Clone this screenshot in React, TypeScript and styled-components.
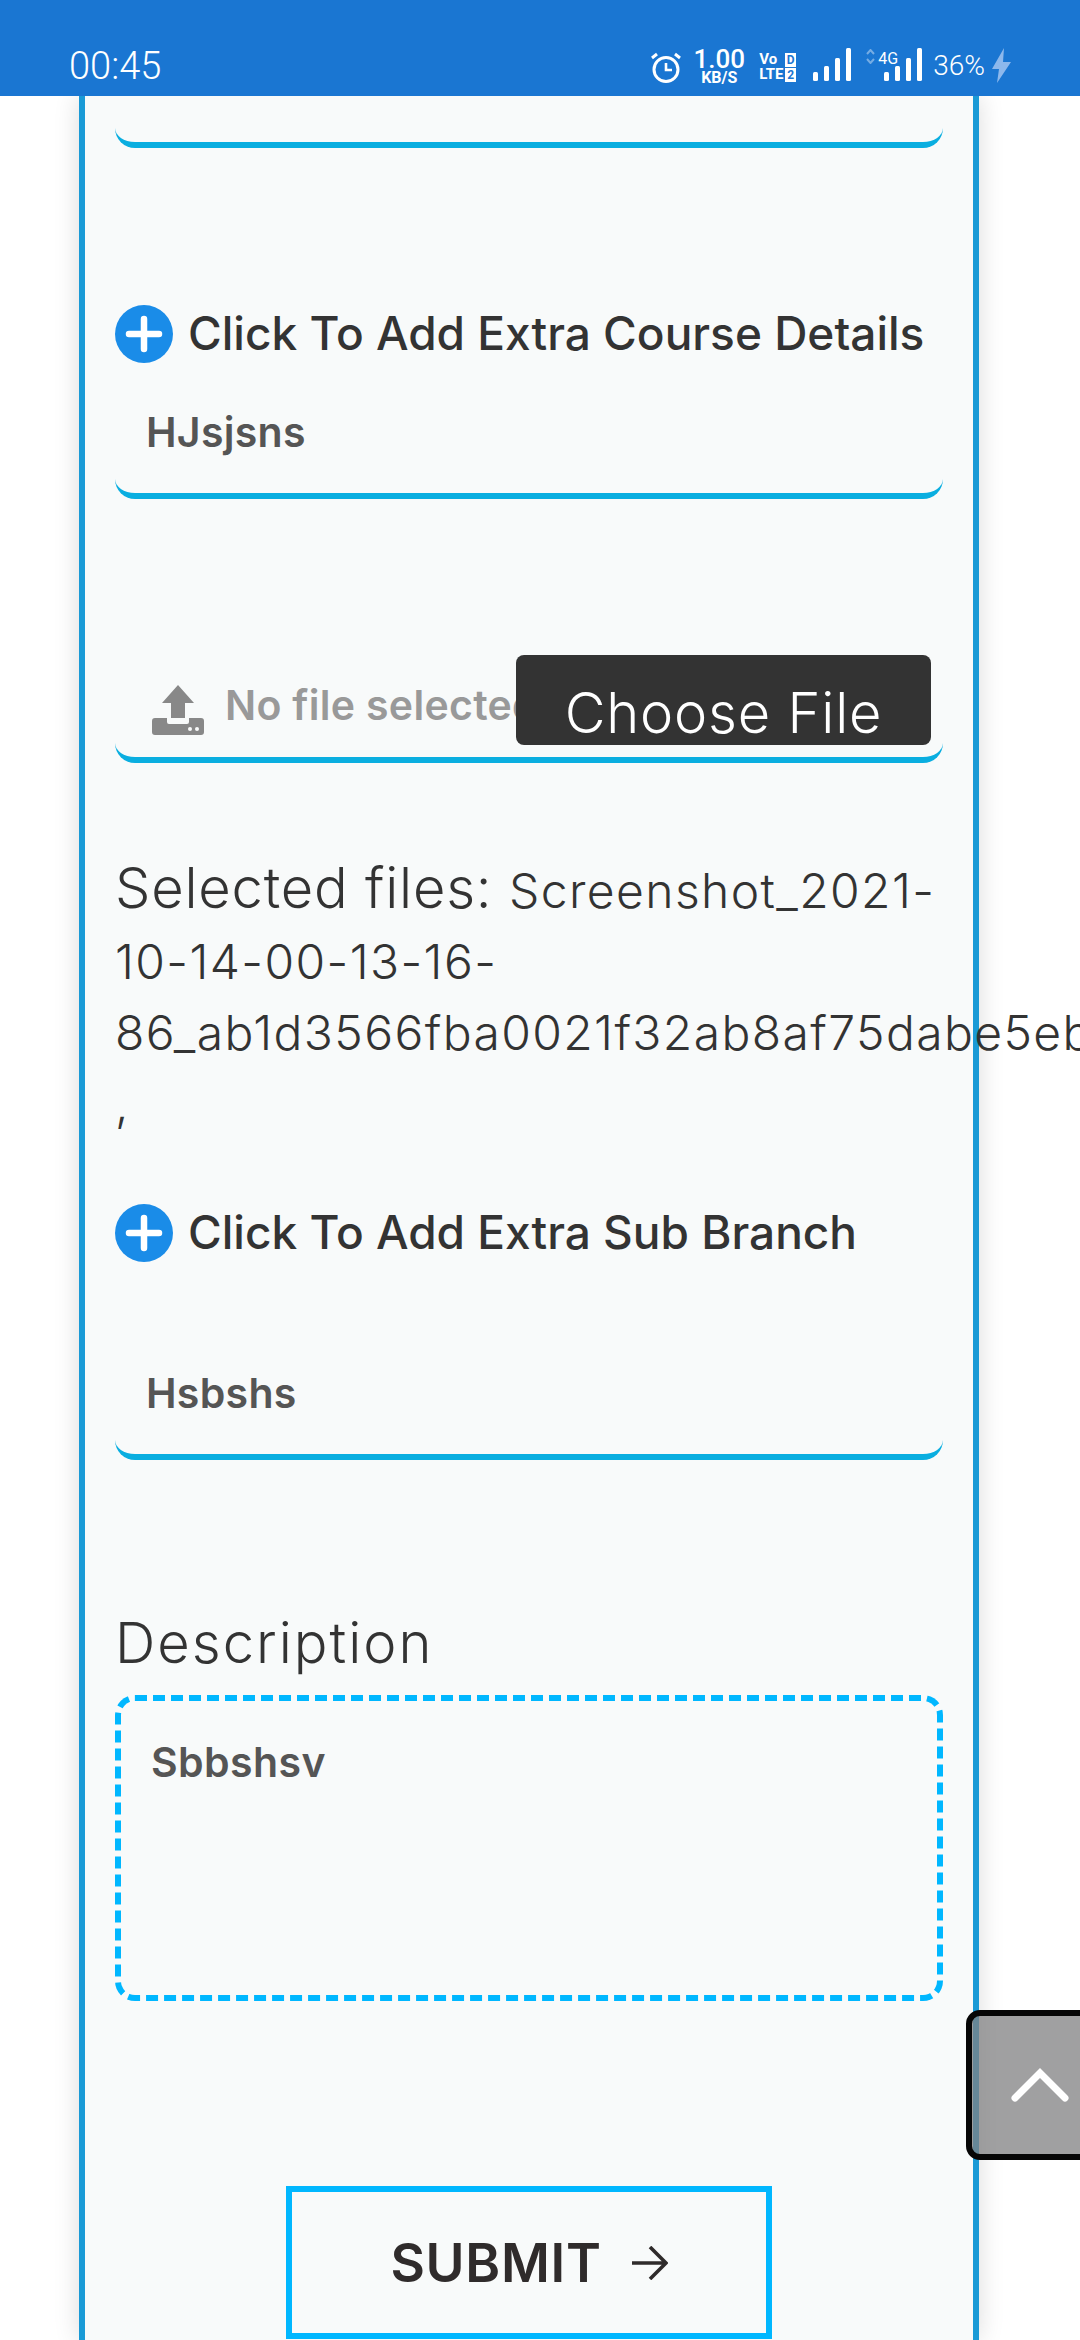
import styled, { createGlobalStyle } from "styled-components";

const GlobalStyle = createGlobalStyle`
  html, body {
    margin: 0;
    padding: 0;
    background: #ffffff;
  }
  * {
    box-sizing: border-box;
  }
`;

const colors = {
  bar: "#1a76d2",
  card: "#f8fafa",
  cardBorder: "#1a9ad6",
  line: "#0aaee0",
  dash: "#00b7ff",
  text: "#2f2b2b",
};

const FONT = `Inter, "Open Sans", sans-serif`;

const Page = styled.div`
  width: 1080px;
  height: 2340px;
  overflow: hidden;
  display: flex;
  flex-direction: column;
  font-family: ${FONT};
  position: relative;
`;

const StatusBar = styled.div`
  flex: none;
  height: 96px;
  background: ${colors.bar};
  display: flex;
  align-items: flex-start;
  padding: 48px 69px 0 69px;
  color: #ffffff;
  font-family: Roboto, sans-serif;
  position: relative;
  z-index: 2;
`;

const Clock = styled.div`
  font-size: 38px;
  font-weight: 300;
  line-height: 36px;
  margin-top: 0;
`;

const StatusIcons = styled.div`
  margin-left: auto;
  display: flex;
  align-items: flex-start;
`;

const AlarmIcon = styled.svg`
  width: 30px;
  height: 31px;
  margin-top: 4px;
`;

const Speed = styled.div`
  margin-left: 13px;
  width: 50px;
  display: flex;
  flex-direction: column;
  align-items: center;
  font-weight: 500;
`;

const SpeedValue = styled.span`
  font-size: 26px;
  line-height: 22px;
`;

const SpeedUnit = styled.span`
  font-size: 16px;
  line-height: 14px;
  margin-top: 1px;
  font-weight: 700;
`;

const Volte = styled.div`
  margin-left: 15px;
  width: 37px;
  display: flex;
  flex-direction: column;
  margin-top: 4px;
  font-weight: 700;
  font-size: 15px;
  line-height: 15px;
`;

const VolteRow = styled.div`
  display: flex;
  justify-content: space-between;
  align-items: center;
  height: 15px;
`;

const VolteBox = styled.span`
  background: #ffffff;
  color: ${colors.bar};
  width: 11px;
  height: 14px;
  font-size: 12px;
  line-height: 14px;
  text-align: center;
`;

const SignalSvg = styled.svg<{ $left: number }>`
  width: 38px;
  height: 33px;
  margin-left: ${(p) => p.$left}px;
  flex: none;
`;

const DataGroup = styled.div`
  margin-left: 15px;
  width: 56px;
  height: 33px;
  display: flex;
  position: relative;
`;

const UpDown = styled.svg`
  width: 9px;
  height: 15px;
  margin-top: 1px;
  flex: none;
`;

const FourG = styled.span`
  position: absolute;
  left: 12px;
  top: 3px;
  font-size: 16px;
  line-height: 16px;
  font-weight: 400;
`;

const Battery = styled.div`
  margin-left: 11px;
  font-size: 28px;
  font-weight: 300;
  line-height: 30px;
  margin-top: 3px;
`;

const BoltIcon = styled.svg`
  width: 19px;
  height: 35px;
  margin-left: 7px;
`;

const Card = styled.div`
  flex: 1;
  width: 900px;
  margin-left: 79px;
  border-left: 6px solid ${colors.cardBorder};
  border-right: 6px solid ${colors.cardBorder};
  background: ${colors.card};
  box-shadow: 0 0 24px rgba(0, 0, 0, 0.14);
  padding: 0 30px;
  display: flex;
  flex-direction: column;
`;

const Field = styled.div<{ $height: number }>`
  flex: none;
  height: ${(p) => p.$height}px;
  border-bottom: 6px solid ${colors.line};
  border-radius: 0 0 20px 20px;
  display: flex;
  align-items: flex-end;
  padding: 0 0 37px 31px;
`;

const FieldText = styled.span`
  font-size: 41px;
  font-weight: 600;
  line-height: 48px;
  color: #555555;
  letter-spacing: 0.3px;
`;

const AddRow = styled.div<{ $top: number }>`
  flex: none;
  display: flex;
  align-items: center;
  gap: 15px;
  margin-top: ${(p) => p.$top}px;
  height: 58px;
`;

const AddIcon = styled.svg`
  width: 58px;
  height: 58px;
  flex: none;
`;

const AddLabel = styled.span`
  font-size: 46px;
  font-weight: 500;
  color: #333333;
  white-space: nowrap;
  margin-top: -2px;
`;

const FileField = styled.div`
  flex: none;
  height: 108px;
  margin-top: 156px;
  border-bottom: 6px solid ${colors.line};
  border-radius: 0 0 20px 20px;
  display: flex;
  padding: 0 12px 12px 37px;
`;

const FileName = styled.div`
  flex: 1;
  min-width: 0;
  overflow: hidden;
  display: flex;
  align-items: flex-end;
  gap: 21px;
  white-space: nowrap;
  padding-bottom: 10px;
`;

const FileNameText = styled.span`
  font-size: 41px;
  font-weight: 600;
  line-height: 48px;
  letter-spacing: 0.3px;
  color: #999999;
  margin-bottom: 6px;
`;

const UploadIcon = styled.svg`
  width: 52px;
  height: 50px;
  flex: none;
`;

const ChooseButton = styled.div`
  flex: none;
  width: 415px;
  height: 90px;
  background: #333333;
  border-radius: 8px;
  color: #ffffff;
  font-size: 56px;
  font-weight: 300;
  line-height: 60px;
  letter-spacing: 0.8px;
  text-align: center;
  padding-top: 28px;
  white-space: nowrap;
`;

const SelectedFiles = styled.div`
  flex: none;
  margin-top: 90px;
  font-size: 48px;
  line-height: 71px;
  height: 289px;
  color: #333333;
  font-weight: 300;
  letter-spacing: 1.4px;
`;

const SelectedLabel = styled.span`
  font-size: 56px;
  letter-spacing: 0.8px;
`;

const LongName = styled.span`
  white-space: nowrap;
`;

const DescriptionLabel = styled.div`
  flex: none;
  margin-top: 147px;
  font-size: 56px;
  line-height: 72px;
  font-weight: 300;
  letter-spacing: 2px;
  color: #333333;
`;

const DescriptionBox = styled.div`
  flex: none;
  height: 306px;
  margin-top: 16px;
  border: 6px dashed ${colors.dash};
  border-radius: 20px;
  padding: 37px 30px;
  font-size: 41px;
  line-height: 48px;
  font-weight: 600;
  color: #555555;
  letter-spacing: 0.4px;
`;

const SubmitButton = styled.div`
  flex: none;
  align-self: center;
  width: 486px;
  height: 153px;
  margin-top: 185px;
  border: 6px solid ${colors.dash};
  display: flex;
  align-items: center;
  justify-content: center;
  gap: 30px;
  font-size: 53px;
  font-weight: 600;
  letter-spacing: 0.7px;
  color: ${colors.text};
`;

const ArrowIcon = styled.svg`
  width: 36px;
  height: 34px;
  flex: none;
`;

const ScrollTop = styled.div`
  position: absolute;
  left: 966px;
  top: 2010px;
  width: 160px;
  height: 150px;
  border: 6px solid #060606;
  border-radius: 14px;
  background: rgba(128, 128, 130, 0.75);
  display: flex;
  align-items: center;
  padding-left: 39px;
  z-index: 3;
`;

const ChevronIcon = styled.svg`
  width: 58px;
  height: 36px;
  margin-top: 2px;
`;

function Signal() {
  return (
    <>
      <rect x="0" y="24" width="5" height="9" rx="1.5" fill="#fff" />
      <rect x="11" y="18" width="5" height="15" rx="1.5" fill="#fff" />
      <rect x="22" y="10" width="5" height="23" rx="1.5" fill="#fff" />
      <rect x="33" y="0" width="5" height="33" rx="1.5" fill="#fff" />
    </>
  );
}

function PlusCircle() {
  return (
    <AddIcon viewBox="0 0 58 58">
      <circle cx="29" cy="29" r="29" fill="#1a8ce8" />
      <path d="M29 14v30M14 29h30" stroke="#fff" strokeWidth="6.5" strokeLinecap="round" />
    </AddIcon>
  );
}

export default function App() {
  return (
    <Page>
      <GlobalStyle />
      <StatusBar>
        <Clock>00:45</Clock>
        <StatusIcons>
          <AlarmIcon viewBox="0 0 30 31">
            <circle cx="15" cy="17.5" r="12" fill="none" stroke="#fff" strokeWidth="3" />
            <path d="M15 11v7h6" fill="none" stroke="#fff" strokeWidth="2.6" />
            <path d="M1 6l5-4M29 6l-5-4" stroke="#fff" strokeWidth="3" />
          </AlarmIcon>
          <Speed>
            <SpeedValue>1.00</SpeedValue>
            <SpeedUnit>KB/S</SpeedUnit>
          </Speed>
          <Volte>
            <VolteRow>
              Vo<VolteBox>D</VolteBox>
            </VolteRow>
            <VolteRow>
              LTE<VolteBox>2</VolteBox>
            </VolteRow>
          </Volte>
          <SignalSvg $left={17} viewBox="0 0 38 33">
            <Signal />
          </SignalSvg>
          <DataGroup>
            <UpDown viewBox="0 0 9 15">
              <path d="M1 5l3.5-4L8 5M1 10l3.5 4L8 10" fill="none" stroke="#fff" strokeOpacity="0.4" strokeWidth="2" />
            </UpDown>
            <FourG>4G</FourG>
            <SignalSvg $left={9} viewBox="0 0 38 33">
              <Signal />
            </SignalSvg>
          </DataGroup>
          <Battery>36%</Battery>
          <BoltIcon viewBox="0 0 19 35">
            <path d="M12 0L0 21h7L5 35 19 14h-8z" fill="#8db8ec" />
          </BoltIcon>
        </StatusIcons>
      </StatusBar>
      <Card>
        <Field $height={52} />
        <AddRow $top={157}>
          <PlusCircle />
          <AddLabel>Click To Add Extra Course Details</AddLabel>
        </AddRow>
        <Field $height={136}>
          <FieldText>HJsjsns</FieldText>
        </Field>
        <FileField>
          <FileName>
            <UploadIcon viewBox="0 0 52 50">
              <path d="M26 0L42 18H33V33H19V18H10z" fill="#888" />
              <path
                d="M3 33H15V37Q15 39 17 39H35Q37 39 37 37V33H49Q52 33 52 36V47Q52 50 49 50H3Q0 50 0 47V36Q0 33 3 33Z"
                fill="#888"
              />
              <circle cx="38" cy="44" r="2" fill="#f8fafa" />
              <circle cx="45" cy="44" r="2" fill="#f8fafa" />
            </UploadIcon>
            <FileNameText>No file selected</FileNameText>
          </FileName>
          <ChooseButton>Choose File</ChooseButton>
        </FileField>
        <SelectedFiles>
          <SelectedLabel>Selected files: </SelectedLabel>
          Screenshot_2021-10-14-00-13-16-
          <br />
          <LongName>86_ab1d3566fba0021f32ab8af75dabe5ebd.jpg</LongName>
          <br />,
        </SelectedFiles>
        <AddRow $top={62}>
          <PlusCircle />
          <AddLabel>Click To Add Extra Sub Branch</AddLabel>
        </AddRow>
        <Field $height={198}>
          <FieldText>Hsbshs</FieldText>
        </Field>
        <DescriptionLabel>Description</DescriptionLabel>
        <DescriptionBox>Sbbshsv</DescriptionBox>
        <SubmitButton>
          SUBMIT
          <ArrowIcon viewBox="0 0 36 34">
            <path d="M0 17h34M18 1l16 16-16 16" fill="none" stroke={colors.text} strokeWidth="3.6" />
          </ArrowIcon>
        </SubmitButton>
      </Card>
      <ScrollTop>
        <ChevronIcon viewBox="0 0 58 36">
          <path d="M4 30L29 5l25 25" fill="none" stroke="#fff" strokeWidth="7" strokeLinecap="round" />
        </ChevronIcon>
      </ScrollTop>
    </Page>
  );
}
